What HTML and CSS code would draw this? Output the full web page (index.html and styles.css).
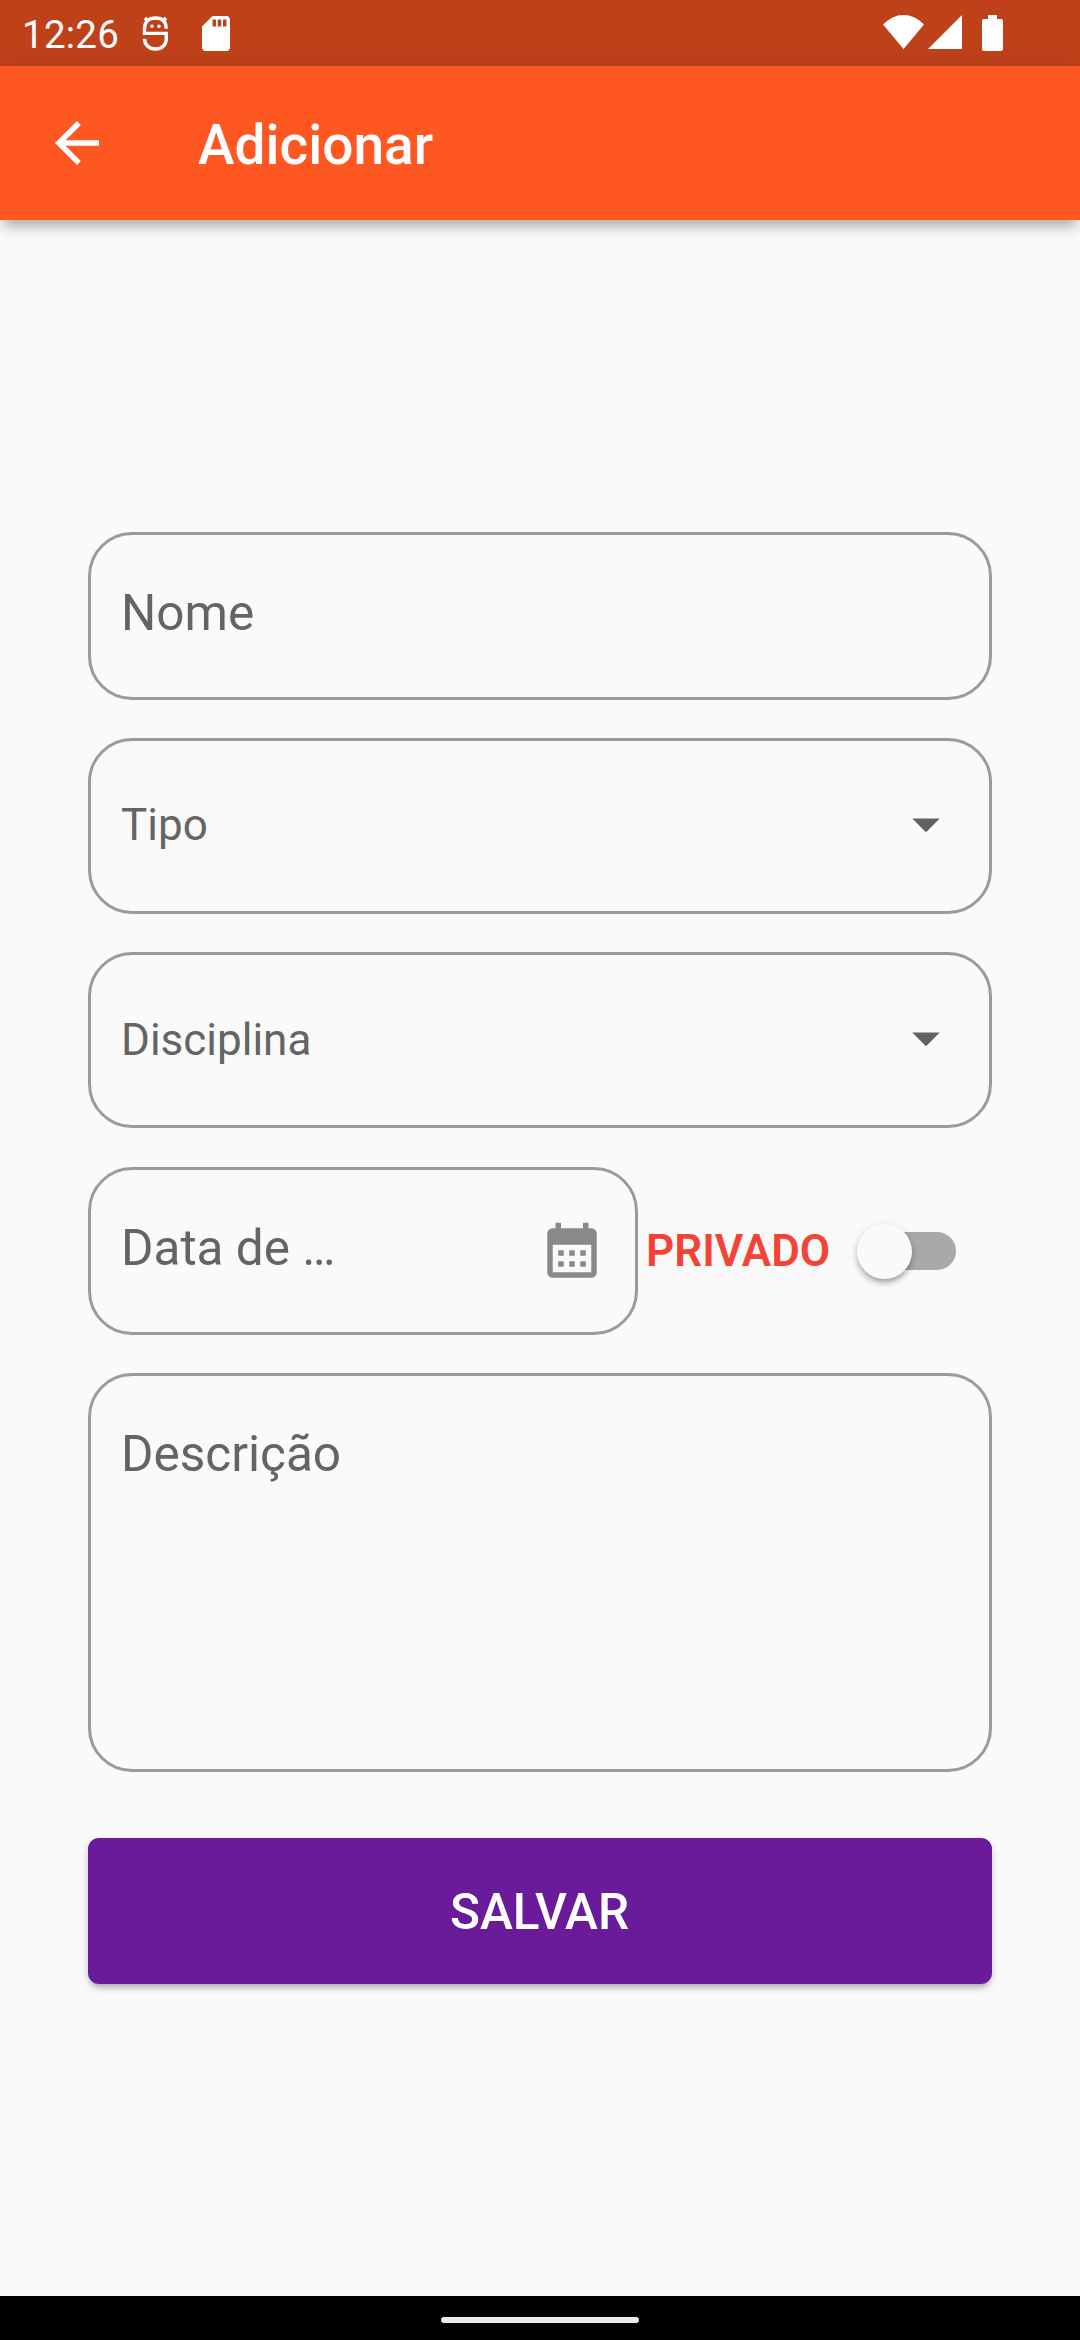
FILE: index.html
```html
<!DOCTYPE html>
<html lang="pt-BR">
<head>
<meta charset="utf-8">
<title>Adicionar</title>
<link rel="stylesheet" href="styles.css">
</head>
<body>
<div class="status">
  <span class="clock">12:26</span>
  <svg class="ic-debug" width="27" height="37" viewBox="0 0 27 37" fill="none" stroke="#fff" stroke-width="3.400">
    <path d="M24.200 13.800C24.200 6.500 20 3 13.500 3S2.500 6.500 2.500 13.800V18.400H24.300V24C24.300 30 19.500 34 13.500 34S2.500 30 2.500 23.800M6 6 3 3M21 6l3-3"/>
    <circle cx="10" cy="11.300" r="1.700" fill="#fff" stroke="none"/><circle cx="17" cy="11.300" r="1.700" fill="#fff" stroke="none"/>
  </svg>
  <svg class="ic-sd" width="28" height="35" viewBox="4 2 16 20" preserveAspectRatio="none" fill="#fff"><path d="M18 2h-8L4.020 8 4 20c0 1.100.9 2 2 2h12c1.100 0 2-.9 2-2V4c0-1.100-.9-2-2-2zm-6 6h-2V4h2v4zm3 0h-2V4h2v4zm3 0h-2V4h2v4z"/></svg>
  <svg class="ic-wifi" width="41" height="34" viewBox="0 0 41 34" fill="#fff"><path d="M20.500 34 0 9.500Q9 0 20.500 0T41 9.500z"/></svg>
  <svg class="ic-signal" width="34" height="34" viewBox="0 0 34 34" fill="#fff"><path d="M0 34H34V0z"/></svg>
  <svg class="ic-battery" width="21" height="36" viewBox="0 0 21 36" fill="#fff"><path d="M6 0h9v4h4q2 0 2 2v28q0 2-2 2H2q-2 0-2-2V6q0-2 2-2h4z"/></svg>
</div>
<header class="appbar">
  <svg width="66" height="66" viewBox="0 0 24 24" fill="#fff"><path d="M20 11H7.830l5.590-5.590L12 4l-8 8 8 8 1.410-1.410L7.830 13H20v-2z"/></svg>
  <h1 class="title">Adicionar</h1>
</header>
<main class="form">
  <div class="field name"><span>Nome</span></div>
  <div class="field select type"><span>Tipo</span><svg width="66" height="66" viewBox="0 0 24 24" fill="#616161"><path d="M7 10l5 5 5-5z"/></svg></div>
  <div class="field select"><span>Disciplina</span><svg width="66" height="66" viewBox="0 0 24 24" fill="#616161"><path d="M7 10l5 5 5-5z"/></svg></div>
  <div class="row">
    <div class="field date"><span>Data de …</span><svg width="66" height="66" viewBox="0 0 24 24" fill="#898989" fill-rule="evenodd"><path d="M6 1h2v2h8V1h2v2h1a2 2 0 0 1 2 2v14a2 2 0 0 1-2 2H5a2 2 0 0 1-2-2V5a2 2 0 0 1 2-2h1zM5 9v10h14V9zM7 11h2v2H7zM11 11h2v2h-2zM15 11h2v2h-2zM7 15h2v2H7zM11 15h2v2h-2zM15 15h2v2h-2z"/></svg></div>
    <span class="private">PRIVADO</span>
    <div class="switch"><div class="thumb"></div></div>
  </div>
  <div class="field description"><span>Descrição</span></div>
  <button class="save">SALVAR</button>
</main>
<footer class="navbar"><div class="handle"></div></footer>
</body>
</html>
```
FILE: styles.css
```css
* { box-sizing: border-box; }
body {
  margin: 0;
  width: 1080px;
  height: 2340px;
  display: flex;
  flex-direction: column;
  background: #fafafa;
  font-family: Roboto, sans-serif;
  color: #646464;
  overflow: hidden;
}
svg { display: block; flex: none; }
.status {
  height: 66px;
  flex: none;
  display: flex;
  align-items: flex-start;
  padding: 15px 77px 0 22px;
  background: #bf411a;
  color: #fff;
}
.clock { width: 120px; font-size: 38.5px; line-height: 40px; letter-spacing: .25px; }
.ic-sd { margin: 1px 0 0 33px; }
.ic-wifi { margin-left: auto; }
.ic-signal { margin-left: 4px; }
.ic-battery { margin-left: 20px; }
.appbar {
  height: 154px;
  flex: none;
  display: flex;
  align-items: center;
  padding-left: 44px;
  background: #ff5722;
  color: #fff;
  box-shadow: 0 11px 11px -5px rgba(0, 0, 0, .2), 0 5px 18px rgba(0, 0, 0, .16);
}
.title {
  margin: 0 0 0 88px;
  padding-top: 3px;
  font-size: 55px;
  font-weight: 500;
}
.form {
  flex: 1;
  display: flex;
  flex-direction: column;
  padding: 312px 88px 0;
}
.field {
  display: flex;
  border: 3px solid #9b9b9b;
  border-radius: 44px;
  padding-left: 30px;
  font-size: 49.5px;
  line-height: 58px;
}
.name { height: 168px; padding-top: 49px; margin-bottom: 38px; }
.select {
  height: 176px;
  align-items: center;
  justify-content: space-between;
  padding-right: 30px;
  margin-bottom: 38px;
  font-size: 44px;
  line-height: 52px;
}
.select svg { margin-top: -4px; }
.type span { margin-top: -2px; }
.row { display: flex; align-items: center; height: 168px; margin: 1px 0 38px; }
.date {
  width: 550px;
  height: 168px;
  padding-top: 49px;
  padding-right: 30px;
  justify-content: space-between;
}
.date svg { margin-top: 1px; }
.private {
  margin-left: 8px;
  font-size: 44px;
  font-weight: 600;
  line-height: 52px;
  color: #f44336;
}
.switch {
  margin-left: auto;
  margin-right: 36px;
  width: 91px;
  height: 38px;
  border-radius: 19px;
  background: #a9a9a9;
}
.thumb {
  width: 55px;
  height: 55px;
  margin: -8px 0 0 -8px;
  border-radius: 50%;
  background: #fafafa;
  box-shadow: 0 5px 6px -2px rgba(0, 0, 0, .3), 0 2px 9px rgba(0, 0, 0, .16);
}
.description { height: 399px; padding-top: 49px; }
.save {
  height: 146px;
  margin-top: 66px;
  padding: 1px 1px 0 0;
  border: 0;
  border-radius: 11px;
  background: #6a1b9a;
  color: #fff;
  font-family: inherit;
  font-size: 49.5px;
  font-weight: 500;
  box-shadow: 0 6px 6px -3px rgba(0, 0, 0, .22), 0 3px 9px rgba(0, 0, 0, .16);
}
.navbar {
  height: 44px;
  flex: none;
  display: flex;
  align-items: center;
  justify-content: center;
  padding-top: 4px;
  background: #000;
}
.handle { width: 198px; height: 6px; border-radius: 3px; background: #ebebeb; }
```
